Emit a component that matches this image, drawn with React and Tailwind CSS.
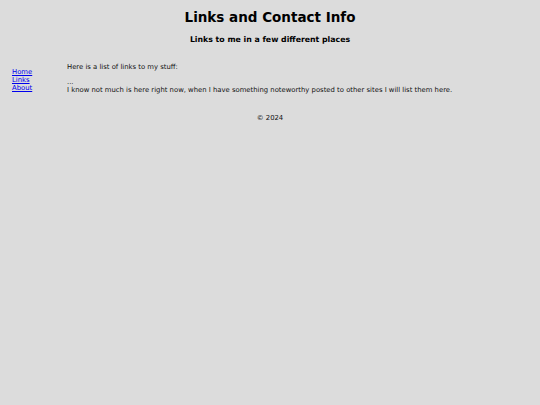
// App.jsx
// Simple static "Links and Contact Info" page: header, side nav, content and footer.

import React from 'react';

const navLinks = ['Home', 'Links', 'About'];

const App = () => {
  return (
    <div
      className="min-h-screen w-full bg-[#dcdcdc] text-black"
      style={{ fontFamily: '"DejaVu Sans", Verdana, sans-serif' }}
    >
      <header className="pt-[9px] text-center">
        <h1 className="text-[13.5px] font-bold leading-[16px]">Links and Contact Info</h1>
        <h3 className="mt-[10px] text-[7.8px] font-bold leading-[9px]">
          Links to me in a few different places
        </h3>
      </header>

      <div className="mt-[20px] flex">
        <nav className="w-[67px] shrink-0 pl-[12px] pt-[4px] text-[6.85px] leading-[8px]">
          {navLinks.map((link) => (
            <a key={link} href="#" className="block text-[#0000ee] underline">
              {link}
            </a>
          ))}
        </nav>
        <main className="text-[6.85px] leading-[7.7px] text-[#111]">
          <p>Here is a list of links to my stuff:</p>
          <p className="mt-[7.7px]">
            ...
            <br />
            I know not much is here right now, when I have something noteworthy posted to other
            sites I will list them here.
          </p>
        </main>
      </div>

      <footer className="mt-[19px] text-center text-[6.85px] leading-[8px] text-[#111]">
        © 2024
      </footer>
    </div>
  );
};

export default App;
